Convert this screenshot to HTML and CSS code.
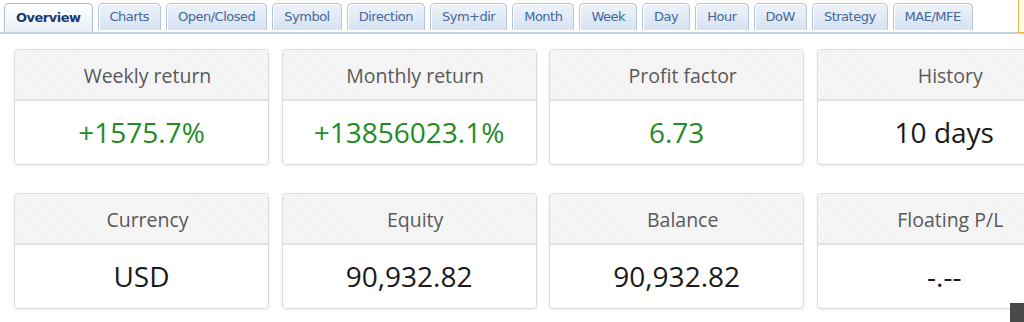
FILE: index.html
```html
<!DOCTYPE html>
<html lang="en">
<head>
    <meta charset="UTF-8">
    <title>Account overview</title>
    <link rel="stylesheet" href="styles.css">
</head>
<body>
    <div class="topbar">
        <ul class="tabs">
            <li class="tab active">Overview</li>
            <li class="tab">Charts</li>
            <li class="tab">Open/Closed</li>
            <li class="tab">Symbol</li>
            <li class="tab">Direction</li>
            <li class="tab">Sym+dir</li>
            <li class="tab">Month</li>
            <li class="tab">Week</li>
            <li class="tab">Day</li>
            <li class="tab">Hour</li>
            <li class="tab">DoW</li>
            <li class="tab">Strategy</li>
            <li class="tab">MAE/MFE</li>
        </ul>
        <div class="notice"></div>
    </div>

    <main class="stats">
        <div class="card">
            <div class="card-head">Weekly return</div>
            <div class="card-value positive">+1575.7%</div>
        </div>
        <div class="card">
            <div class="card-head">Monthly return</div>
            <div class="card-value positive">+13856023.1%</div>
        </div>
        <div class="card">
            <div class="card-head">Profit factor</div>
            <div class="card-value positive">6.73</div>
        </div>
        <div class="card">
            <div class="card-head">History</div>
            <div class="card-value">10 days</div>
        </div>
        <div class="card">
            <div class="card-head">Currency</div>
            <div class="card-value">USD</div>
        </div>
        <div class="card">
            <div class="card-head">Equity</div>
            <div class="card-value">90,932.82</div>
        </div>
        <div class="card">
            <div class="card-head">Balance</div>
            <div class="card-value">90,932.82</div>
        </div>
        <div class="card">
            <div class="card-head">Floating P/L</div>
            <div class="card-value">-.--</div>
        </div>
    </main>

    <div class="corner"></div>
</body>
</html>
```

FILE: styles.css
```css
* {
    margin: 0;
    padding: 0;
    box-sizing: border-box;
}

body {
    width: 1024px;
    height: 322px;
    overflow: hidden;
    background: #fff;
    font-family: 'Open Sans', sans-serif;
    position: relative;
}

.topbar {
    display: flex;
    justify-content: space-between;
    align-items: flex-end;
    height: 34px;
    border-bottom: 2px solid #c3d3e6;
}

.tabs {
    display: flex;
    gap: 5px;
    list-style: none;
    padding-left: 4px;
}

.tab {
    height: 27px;
    padding: 0 11px;
    line-height: 26px;
    font-family: 'DejaVu Sans', Verdana, sans-serif;
    font-size: 13px;
    letter-spacing: -0.5px;
    color: #46679a;
    background: linear-gradient(#eef3fa, #d5e2f2);
    border: 1px solid #b3c6de;
    border-bottom: none;
    border-radius: 5px 5px 0 0;
    box-shadow: inset 1px 1px 0 #fff;
}

.tab.active {
    font-weight: bold;
    color: #1d3b6b;
    height: 29px;
    line-height: 28px;
    padding: 0 11px;
    background: linear-gradient(#ffffff, #eaf0f8);
    border-color: #a9bdd7;
}

.notice {
    width: 6px;
    height: 33px;
    margin-bottom: -1px;
    background: #fffbe9;
    border: 1px solid #efb34c;
    border-right: none;
    border-top: none;
}

.stats {
    display: grid;
    grid-template-columns: repeat(4, 255px);
    column-gap: 12.6px;
    row-gap: 28px;
    padding: 15px 0 0 14px;
}

.card {
    height: 116px;
    border: 1px solid #dcdcdc;
    border-radius: 4px;
    background: #fff;
    box-shadow: 0 1px 3px rgba(0, 0, 0, 0.08);
    overflow: hidden;
}

.card-head {
    height: 51px;
    line-height: 52px;
    padding-left: 12px;
    text-align: center;
    font-size: 19.5px;
    color: #595959;
    background-color: #f6f6f6;
    background-image: repeating-linear-gradient(45deg, rgba(0, 0, 0, 0.015) 0 2px, transparent 2px 4px);
    border-bottom: 2px solid #e2e2e2;
}

.card-value {
    height: 62px;
    line-height: 62px;
    text-align: center;
    font-size: 28px;
    color: #1a1a1a;
}

.card-value.positive {
    color: #238b23;
}

.corner {
    position: absolute;
    right: 0;
    bottom: 0;
    width: 14px;
    height: 19px;
    background: #4a4a4a;
}
```
